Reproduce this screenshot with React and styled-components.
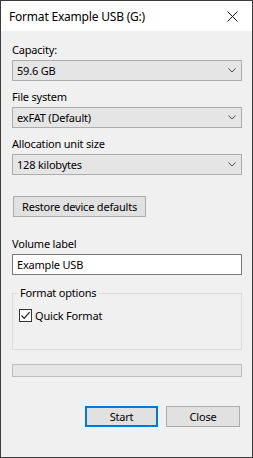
import React, { useState } from "react";
import styled, { createGlobalStyle } from "styled-components";

const GlobalStyle = createGlobalStyle`
	html, body {
		margin: 0;
		padding: 0;
		background: #f0f0f0;
	}
	* {
		box-sizing: border-box;
	}
`;

const Chevron = () => (
	<svg width="8" height="5" viewBox="0 0 8 5">
		<path d="M0.5 0.5 L4 4 L7.5 0.5" fill="none" stroke="#4a4a4a" strokeWidth="1" />
	</svg>
);

const CloseIcon = () => (
	<svg width="11" height="11" viewBox="0 0 11 11">
		<path d="M0.5 0.5 L10.5 10.5 M10.5 0.5 L0.5 10.5" fill="none" stroke="#111" strokeWidth="1" />
	</svg>
);

const CheckMark = () => (
	<svg width="11" height="11" viewBox="0 0 11 11">
		<path d="M1.5 5.5 L4.2 8.3 L9.6 2.2" fill="none" stroke="#222" strokeWidth="1.2" />
	</svg>
);

const Select = ({ value }) => (
	<SelectBox>
		<span>{value}</span>
		<Chevron />
	</SelectBox>
);

const App = () => {
	const [label, setLabel] = useState("Example USB");
	const [quick, setQuick] = useState(true);

	return (
		<>
			<GlobalStyle />
			<Window>
				<TitleBar>
					<Title>Format Example USB (G:)</Title>
					<CloseButton>
						<CloseIcon />
					</CloseButton>
				</TitleBar>
				<Body>
					<Field>
						<Label>Capacity:</Label>
						<Select value="59.6 GB" />
					</Field>
					<Field>
						<Label>File system</Label>
						<Select value="exFAT (Default)" />
					</Field>
					<Field>
						<Label>Allocation unit size</Label>
						<Select value="128 kilobytes" />
					</Field>

					<RestoreButton>Restore device defaults</RestoreButton>

					<Field>
						<Label>Volume label</Label>
						<TextInput value={label} onChange={(e) => setLabel(e.target.value)} />
					</Field>

					<GroupBox>
						<Legend>Format options</Legend>
						<CheckRow onClick={() => setQuick(!quick)}>
							<CheckBox>{quick && <CheckMark />}</CheckBox>
							<span>Quick Format</span>
						</CheckRow>
					</GroupBox>

					<Progress />

					<Footer>
						<DialogButton $primary>Start</DialogButton>
						<DialogButton>Close</DialogButton>
					</Footer>
				</Body>
			</Window>
		</>
	);
};

export default App;

const Window = styled.div`
	width: 253px;
	height: 458px;
	border: 1px solid #3c3c3c;
	background: #f0f0f0;
	display: flex;
	flex-direction: column;
	font-family: "Noto Sans", "Open Sans", sans-serif;
	font-size: 11px;
	letter-spacing: -0.2px;
	color: #000;
`;

const TitleBar = styled.div`
	height: 30px;
	background: #fff;
	display: flex;
	align-items: center;
	justify-content: space-between;
	padding: 0 10px 0 8px;
`;

const Title = styled.div`
	font-size: 12px;
	color: #000;
`;

const CloseButton = styled.div`
	display: flex;
	align-items: center;
	justify-content: center;
	width: 20px;
	height: 20px;
`;

const Body = styled.div`
	flex: 1;
	display: flex;
	flex-direction: column;
	padding: 11px 10px 0 11px;
`;

const Field = styled.div`
	display: flex;
	flex-direction: column;
	margin-bottom: 8px;
`;

const Label = styled.div`
	line-height: 16px;
	margin-bottom: 2px;
`;

const SelectBox = styled.div`
	height: 21px;
	border: 1px solid #adadad;
	background: #e5e5e5;
	display: flex;
	align-items: center;
	justify-content: space-between;
	padding: 0 5px 0 4px;
`;

const RestoreButton = styled.button`
	align-self: flex-start;
	margin: 13px 0 19px 1px;
	height: 21px;
	padding: 0 8px;
	border: 1px solid #adadad;
	background: #e1e1e1;
	font: inherit;
	letter-spacing: inherit;
	color: #000;
`;

const TextInput = styled.input`
	height: 21px;
	border: 1px solid #7a7a7a;
	background: #fff;
	padding: 0 4px;
	font: inherit;
	letter-spacing: inherit;
	color: #000;
	outline: none;
`;

const GroupBox = styled.fieldset`
	margin: 3px 0 0;
	height: 64px;
	border: 1px solid #dcdcdc;
	padding: 8px 5px 0;
`;

const Legend = styled.legend`
	padding: 0 2px;
	line-height: 14px;
`;

const CheckRow = styled.label`
	display: flex;
	align-items: center;
	gap: 3px;
	margin-left: 1px;
	cursor: default;
`;

const CheckBox = styled.span`
	width: 13px;
	height: 13px;
	border: 1px solid #333;
	background: #fff;
	display: flex;
	align-items: center;
	justify-content: center;
`;

const Progress = styled.div`
	margin-top: 14px;
	height: 13px;
	border: 1px solid #bcbcbc;
	background: #e6e6e6;
`;

const Footer = styled.div`
	display: flex;
	justify-content: flex-end;
	gap: 8px;
	margin-top: 29px;
	padding-right: 2px;
`;

const DialogButton = styled.button`
	width: ${(p) => (p.$primary ? "73px" : "74px")};
	height: 21px;
	border: ${(p) => (p.$primary ? "2px solid #0078d7" : "1px solid #adadad")};
	background: #e1e1e1;
	font: inherit;
	letter-spacing: inherit;
	color: #000;
	padding: 0;
`;
